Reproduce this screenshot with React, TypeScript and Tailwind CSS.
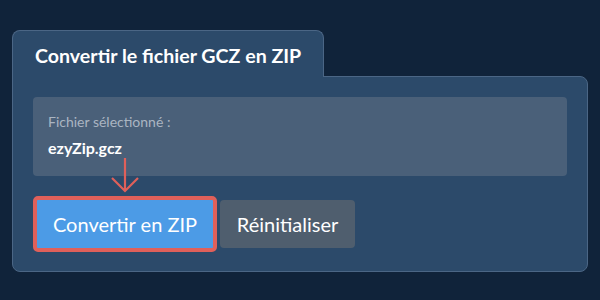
export default function App() {
  return (
    <div className="w-[600px] h-[300px] bg-[#10233a] pt-[30px] px-[12px] font-['Lato','Liberation_Sans',sans-serif]">
      <div className="flex flex-col">
        <div className="self-start w-[312px] h-[47px] -mb-px relative z-10 bg-[#2c4a6a] border border-b-0 border-[#4b6685] rounded-t-[8px] pl-[22px] pt-[13px]">
          <h2 className="text-[19.6px] leading-[24px] font-bold text-white">Convertir le fichier GCZ en ZIP</h2>
        </div>
        <div className="bg-[#2c4a6a] border border-[#4b6685] rounded-b-[8px] rounded-tr-[8px] px-[20px] pt-[20px] pb-[19px]">
          <div className="bg-[#4a6079] rounded-[4px] h-[79px] px-[15px] pt-[16px]">
            <p className="text-[14px] leading-[17px] text-[#aab5c2]">Fichier sélectionné :</p>
            <p className="mt-[8px] text-[16px] leading-[19px] font-bold text-white">ezyZip.gcz</p>
          </div>
          <div className="relative mt-[20px] flex items-center gap-[3px]">
            <svg className="absolute left-[77px] -top-[38px]" width="30" height="36" viewBox="0 0 30 36" fill="none">
              <path d="M15 0 V33 M2 20 L15 33 L28 20" stroke="#e0605a" strokeWidth="2.2" />
            </svg>
            <button className="h-[56px] w-[184px] border-4 border-[#e0605a] rounded-[5px] bg-[#4c9be6] text-[20px] text-white">
              Convertir en ZIP
            </button>
            <button className="h-[48px] w-[135px] rounded-[4px] bg-[#4f5e6e] text-[20px] text-white">
              Réinitialiser
            </button>
          </div>
        </div>
      </div>
    </div>
  );
}
